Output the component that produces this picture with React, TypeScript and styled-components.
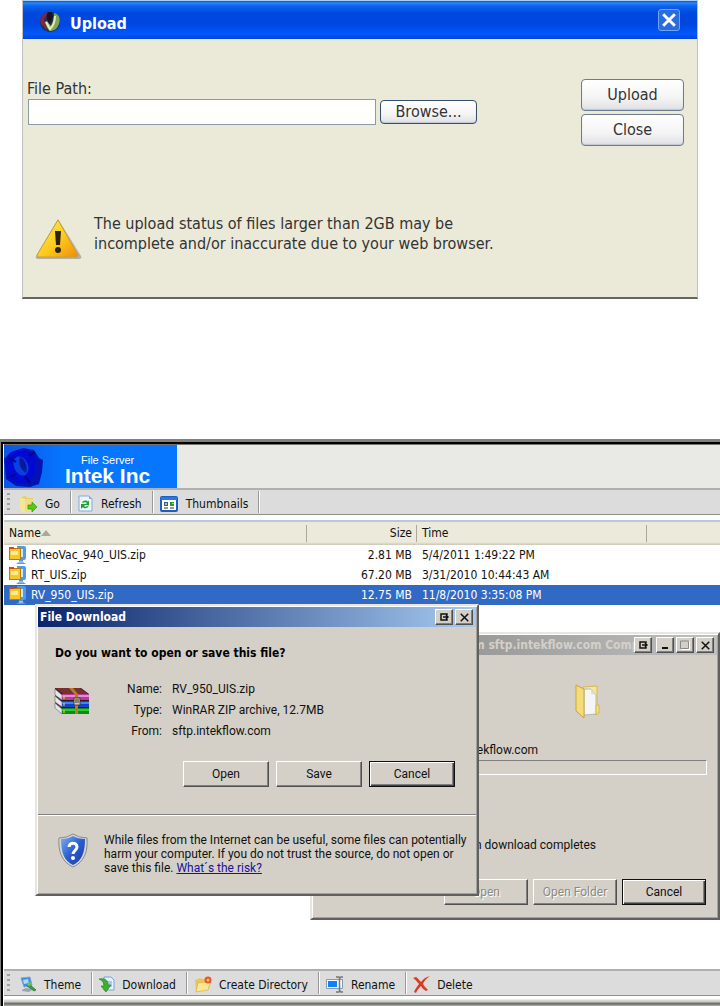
import React from "react";
import styled, { createGlobalStyle, css } from "styled-components";

const tahoma = `"DejaVu Sans Condensed", "DejaVu Sans", sans-serif`;
const sansSerif = `"Liberation Sans", Arial, sans-serif`;
const dialogSans = `Roboto, "Liberation Sans", Arial, sans-serif`;

const GlobalStyle = createGlobalStyle`
  * { box-sizing: border-box; }
  body { margin: 0; background: #fff; color: #111; font-family: ${tahoma}; font-size: 12px; }
  button, input { font: inherit; color: inherit; margin: 0; }
  svg { display: block; flex: none; }
  h1, h2, p, dl, dd { margin: 0; }
`;

const Page = styled.div`
  min-height: 100vh;
  display: flex;
  flex-direction: column;
  gap: 140px;
  overflow: hidden;
`;

/* ---------- Upload window ---------- */

const UploadWindow = styled.section`
  margin: 0 22px;
  height: 299px;
  display: flex;
  flex-direction: column;
  background: #ebe9d8;
  border: 1px solid #c0c4bc;
  border-top-color: #a9cdf4;
  border-bottom: 2px solid #666660;
  color: #333;
  font-size: 16px;
`;

const UploadTitleBar = styled.header`
  height: 38px;
  flex: none;
  display: flex;
  align-items: center;
  gap: 9px;
  padding: 4px 17px 0 16px;
  background: linear-gradient(#1b4fae 0, #2a86fb 2px, #0a63f0 5px, #0047de 12px, #0048e2 24px, #0058fb 33px, #0046d8 38px);
  color: #fff;
`;

const UploadTitle = styled.h1`
  flex: 1;
  padding-top: 4px;
  font-size: 16px;
  line-height: 20px;
`;

const TitleClose = styled.button`
  width: 22px;
  height: 22px;
  margin-bottom: 4px;
  padding: 0;
  display: grid;
  place-items: center;
  background: #2a6ce0;
  border: 1px solid #6ea6fa;
  border-radius: 3px;
`;

const UploadBody = styled.div`
  display: flex;
  justify-content: space-between;
  align-items: flex-start;
  padding: 40px 13px 0 5px;
`;

const FileField = styled.div`
  display: grid;
  grid-template-columns: 348px 97px;
  column-gap: 4px;
  align-items: center;
`;

const FieldLabel = styled.label`
  grid-column: 1 / -1;
  line-height: 20px;
  margin-left: -1px;
`;

const PathInput = styled.input`
  height: 26px;
  background: #fff;
  border: 1px solid #8b9ba8;
  outline: none;
  padding: 0 4px;
`;

const XpButton = styled.button<{ $tall?: boolean }>`
  height: ${(p) => (p.$tall ? 32 : 24)}px;
  padding: 0;
  border: 1px solid ${(p) => (p.$tall ? "#6d7d90" : "#35506e")};
  border-radius: 4px;
  background: linear-gradient(#fff, #f4f4f4 60%, #dfe0e4);
  box-shadow: inset 0 -1px 1px #c0c6d4;
  line-height: 20px;
`;

const UploadActions = styled.div`
  width: 103px;
  display: flex;
  flex-direction: column;
  gap: 3px;
`;

const Notice = styled.div`
  display: flex;
  align-items: flex-end;
  gap: 12px;
  padding: 68px 12px 0 12px;
`;

const NoticeText = styled.p`
  padding-bottom: 6px;
  line-height: 20px;
`;

/* ---------- File manager ---------- */

const FileManager = styled.main`
  position: relative;
  flex: 1;
  display: flex;
  flex-direction: column;
  border-top: 3px solid #808080;
  border-left: 1px solid #808080;
`;

const ManagerFrame = styled.div`
  flex: 1;
  display: flex;
  flex-direction: column;
  border-top: 2px solid #000;
  border-left: 2px solid #000;
  padding-left: 1px;
`;

const Banner = styled.header`
  height: 44px;
  flex: none;
  display: flex;
  border-top: 1px solid #77736e;
  background: #e9e9e6;
`;

const Brand = styled.div`
  width: 173px;
  display: flex;
  gap: 15px;
  background: linear-gradient(90deg, #0a55e6, #0676ff 60px);
  color: #fff;
  font-family: ${sansSerif};
`;

const BrandText = styled.div`
  display: flex;
  flex-direction: column;
  align-items: center;
  padding-top: 9px;
`;

const BrandCaption = styled.span`
  font-size: 11px;
  line-height: 12px;
`;

const BrandName = styled.h2`
  font-size: 21px;
  line-height: 20px;
  white-space: nowrap;
`;

const ToolbarRow = styled.div`
  height: 27px;
  flex: none;
  display: flex;
  align-items: center;
  padding-left: 3px;
  background: #dcdcdc;
  border-top: 2px solid #b0b0ae;
  border-bottom: 1px solid #8f8f8f;
`;

const Grip = styled.span`
  width: 3px;
  height: 18px;
  margin-right: 4px;
  background: repeating-linear-gradient(#a2a2a2 0 2px, #dcdcdc 2px 5px);
`;

const ToolButton = styled.button<{ $roomy?: boolean }>`
  height: 24px;
  display: flex;
  align-items: center;
  gap: ${(p) => (p.$roomy ? 8 : 7)}px;
  padding: 3px 10px 0 6px;
  background: none;
  border: 0;
  white-space: nowrap;
`;

const Divider = styled.span`
  width: 2px;
  height: 22px;
  background: #999;
  border-right: 1px solid #fff;
`;

const FileTable = styled.table`
  width: 100%;
  margin-top: 5px;
  table-layout: fixed;
  border-collapse: collapse;
  border-top: 2px solid #b7c9d9;
`;

const HeadCell = styled.th<{ $right?: boolean; $line?: boolean }>`
  height: 24px;
  padding: 0 5px 2px;
  text-align: ${(p) => (p.$right ? "right" : "left")};
  font-weight: normal;
  line-height: 18px;
  background: ${(p) =>
    p.$line
      ? "linear-gradient(#aca899, #aca899) right 3px / 1px 17px no-repeat, linear-gradient(#ebeadb 20px, #cbc7b8)"
      : "linear-gradient(#ebeadb 20px, #cbc7b8)"};
`;

const FileRow = styled.tr<{ $selected?: boolean }>`
  ${(p) =>
    p.$selected &&
    css`
      background: #316ac5;
      color: #fff;
    `}
`;

const FileCell = styled.td<{ $right?: boolean }>`
  height: 20px;
  padding: 0 5px;
  line-height: 18px;
  text-align: ${(p) => (p.$right ? "right" : "left")};
  white-space: nowrap;
`;

const FileName = styled.span`
  display: flex;
  align-items: center;
  gap: 5px;
`;

const ListSpace = styled.div`
  flex: 1;
`;

const StatusEdge = styled.div`
  height: 10px;
  flex: none;
  background: linear-gradient(#fff 3px, #d8dad4 4px, #c9cbc4 6px, #6f716c 7px, #6f716c 8px, #b7b7b7);
`;

/* ---------- Floating windows ---------- */

const Dialog = styled.section<{ $x: number; $y: number; $w: number; $h: number }>`
  position: absolute;
  left: ${(p) => p.$x}px;
  top: ${(p) => p.$y}px;
  width: ${(p) => p.$w}px;
  height: ${(p) => p.$h}px;
  display: flex;
  flex-direction: column;
  padding: 1px;
  background: #d4d0c8;
  border: 2px solid;
  border-color: #e8e6e0 #606060 #606060 #e8e6e0;
  box-shadow: inset 1px 1px #fff, inset -1px -1px #a5a29c;
  font-family: ${dialogSans};
  font-size: 12px;
`;

const DialogBar = styled.header<{ $inactive?: boolean }>`
  height: 20px;
  flex: none;
  display: flex;
  align-items: center;
  gap: 2px;
  padding: 0 3px 0 2px;
  font-family: ${tahoma};
  background: ${(p) =>
    p.$inactive
      ? "linear-gradient(90deg, #808080, #c0c0c0)"
      : "linear-gradient(90deg, #0a246a, #a6caf0)"};
  color: ${(p) => (p.$inactive ? "#d4d0c8" : "#fff")};
`;

const DialogTitle = styled.h2<{ $indent?: number }>`
  flex: 1;
  min-width: 0;
  padding-left: ${(p) => p.$indent ?? 0}px;
  font-size: 12px;
  line-height: 16px;
  white-space: nowrap;
`;

const raised = css`
  border: 1px solid;
  border-color: #fff #505050 #505050 #fff;
  box-shadow: inset -1px -1px #808080;
  background: #d4d0c8;
`;

const CaptionButton = styled.button<{ $gap?: number }>`
  ${raised}
  width: 18px;
  height: 16px;
  flex: none;
  padding: 0;
  display: grid;
  place-items: center;
  margin-left: ${(p) => p.$gap ?? 0}px;
`;

const PushButton = styled.button<{ $primary?: boolean; $narrow?: boolean }>`
  ${raised}
  width: ${(p) => (p.$narrow ? 84 : 86)}px;
  height: 26px;
  padding: 0;
  line-height: 18px;
  ${(p) =>
    p.$primary &&
    css`
      border-color: #111;
      box-shadow: inset 1px 1px #fff, inset -1px -1px #404040, inset -2px -2px #808080;
    `}
  &:disabled {
    color: #8c8a84;
    text-shadow: 1px 1px #fff;
  }
`;

const Question = styled.p`
  padding: 18px 17px 0;
  font-family: ${tahoma};
  font-weight: bold;
  line-height: 16px;
  color: #000;
`;

const DownloadInfo = styled.div`
  display: flex;
  align-items: center;
  gap: 37px;
  padding: 18px 17px 0 16px;
`;

const ArchiveFrame = styled.span`
  padding-bottom: 20px;
`;

const Details = styled.dl`
  display: grid;
  grid-template-columns: 35px auto;
  column-gap: 10px;
  line-height: 21px;
`;

const Term = styled.dt`
  text-align: right;
`;

const DialogButtons = styled.div<{ $top: number; $right: number; $gap: number }>`
  display: flex;
  justify-content: flex-end;
  gap: ${(p) => p.$gap}px;
  padding: ${(p) => `${p.$top}px ${p.$right}px 0 0`};
`;

const Rule = styled.hr`
  width: 100%;
  margin: 27px 0 0;
  border: 0;
  border-top: 1px solid #808080;
  border-bottom: 1px solid #fff;
`;

const Warning = styled.div`
  display: flex;
  gap: 16px;
  padding: 17px 8px 0 20px;
`;

const WarningText = styled.p`
  line-height: 14px;
  white-space: nowrap;
`;

const RiskLink = styled.a`
  color: #1414a0;
`;

const FolderRow = styled.div`
  padding: 29px 0 0 262px;
`;

const SourceText = styled.p`
  padding: 22px 179px 0 0;
  text-align: right;
  line-height: 18px;
`;

const ProgressTrack = styled.div`
  height: 15px;
  margin: 1px 10px 0;
  border: 1px solid;
  border-color: #808080 #fff #fff #808080;
`;

const CompletionText = styled.p`
  padding: 61px 121px 0 0;
  text-align: right;
  line-height: 18px;
`;

/* ---------- Drawings ---------- */

const AppLogo = () => (
  <svg width="22" height="24" viewBox="0 0 22 24">
    <circle cx="11" cy="12" r="10" fill="#21304f" />
    <path d="M10 2C3 3 0 8 2 14l6 7c-1-5-2-8-3-12z" fill="#7d2745" />
    <path d="M9 2c-2 3-1 7 1 13l4-8-1-5z" fill="#1a1020" />
    <path d="M15 3c5 1 7 6 5 11-2 5-5 7-9 7-3-2-4-5-5-9l2-1 4 5c2-4 3-8 3-13z" fill="#7ea858" />
    <path d="M7 12l4 7q5-5 5-13" stroke="#e2f0b4" strokeWidth="2" fill="none" />
  </svg>
);

const WarningIcon = () => (
  <svg width="47" height="42" viewBox="0 0 47 42">
    <defs>
      <linearGradient id="warn" x1="0" y1="0" x2="1" y2="1">
        <stop offset="0" stopColor="#fff45a" />
        <stop offset=".55" stopColor="#fcc91c" />
        <stop offset="1" stopColor="#ef8b0c" />
      </linearGradient>
    </defs>
    <path d="M23 1L46 38q1 3-2 3H3q-3 0-2-3z" fill="#b3b0a8" />
    <path d="M23 2L43 37q0 2-2 2H4q-2 0-2-2z" fill="url(#warn)" stroke="#c8a03a" />
    <path d="M20 13h6l-1 14h-4z" fill="#2b230c" />
    <circle cx="23" cy="32" r="3" fill="#2b230c" />
  </svg>
);

const CrossIcon = ({ size, color, width }: { size: number; color: string; width: number }) => (
  <svg width={size} height={size} viewBox="0 0 12 12">
    <path d="M1 1l10 10M11 1L1 11" stroke={color} strokeWidth={width} />
  </svg>
);

const BrandMark = () => (
  <svg width="46" height="43" viewBox="0 0 46 43">
    <path d="M0 14L7 7l12-4 11 2 5 8 4 2-1 12-3 12-9 3-14-1L2 34z" fill="#0212b4" />
    <path d="M2 13c5-9 20-11 27-5 5 6 3 20-2 27-8 6-20 3-24-4z" fill="#0009d4" />
    <ellipse cx="17" cy="21" rx="7" ry="10" fill="#0a3fe0" transform="rotate(-24 17 21)" />
    <path d="M16 12c5 2 8 9 6 16-5-3-8-9-6-16z" fill="#061b9a" />
    <path d="M4 12l8 5M21 31l5 7M25 11l6-4M5 33l7-4" stroke="#010880" strokeWidth="2" />
  </svg>
);

const GoIcon = () => (
  <svg width="17" height="18" viewBox="0 0 17 18">
    <path d="M1 2l5-1 1 2h6v12H2z" fill="#e9cf62" />
    <path d="M0 2l5 2v14l-5-3z" fill="#f5e79a" />
    <path d="M5 4h8v11l-8 2z" fill="#f0dc83" />
    <path d="M8 10h4V7l5 5-5 5v-3H8z" fill="#58c81a" stroke="#2c9410" strokeWidth=".7" />
  </svg>
);

const RefreshIcon = () => (
  <svg width="15" height="17" viewBox="0 0 15 17">
    <path d="M1 1h10l3 3v12H1z" fill="#eef5ff" stroke="#86a9d8" />
    <path d="M11 1v3h3z" fill="#86a9d8" />
    <path d="M4 8c1-3 5-3 6-1l1-2v5H7l2-2c-1-1-3-1-5 0zM11 10c-1 4-5 4-6 2l-2 2V9h5l-2 2c1 1 3 1 5-1z" fill="#1f9f2c" />
  </svg>
);

const ThumbnailsIcon = () => (
  <svg width="18" height="16" viewBox="0 0 18 16">
    <rect x="1" y="1" width="16" height="14" rx="1" fill="#fff" stroke="#1d5fc0" strokeWidth="2" />
    <path d="M1 1h16v3H1z" fill="#2b78dc" />
    <path d="M4 6h4v4H4z" fill="#235fae" />
    <path d="M10 6h4v4h-4z" fill="#2f9436" />
    <path d="M5 7h2v2H5zM12 7h2v1h-2z" fill="#e7bd2d" />
    <path d="M4 12h4M10 12h4" stroke="#333" />
  </svg>
);

const ZipIcon = () => (
  <svg width="17" height="18" viewBox="0 0 17 18">
    <path d="M8 0h7q2 0 2 2v10q0 2-2 2h-1v2l3 2H7l3-2v-2z" fill="#4e9be6" />
    <path d="M11 3h3v8h-3z" fill="#cfe6fb" />
    <path d="M10 16h4" stroke="#cfe6fb" />
    <rect x=".5" y="2.500" width="11" height="11" fill="#f6c62f" stroke="#b97d0c" />
    <path d="M0 1h5v2H0z" fill="#e0431c" />
    <path d="M2 5h7v4H2z" fill="#fdea90" />
  </svg>
);

const ThemeIcon = () => (
  <svg width="17" height="17" viewBox="0 0 17 17">
    <path d="M1 2l9-1 2 8-8 2z" fill="#3c8fe0" stroke="#7aa3cf" />
    <path d="M3 4l5-1 1 4-5 1z" fill="#a8dcff" />
    <path d="M2 14q5-4 10 0l-3 2-7-1z" fill="#9aa4ae" />
    <path d="M8 7l8 7-2 1-7-5z" fill="#3c9b3a" stroke="#1c641f" strokeWidth=".6" />
    <circle cx="9" cy="8" r="2" fill="#6fc062" />
  </svg>
);

const DownloadIcon = () => (
  <svg width="16" height="17" viewBox="0 0 16 17">
    <path d="M5 1h7l3 3v10H5z" fill="#e6f1ff" stroke="#7aa0d8" />
    <path d="M8 6h5M9 8h4M10 10h3" stroke="#6f9fe6" />
    <path d="M0 3c6-1 9 1 9 6h3l-5 7-5-6h3c0-3-1-5-5-7z" fill="#3eb02b" stroke="#237a18" strokeWidth=".6" />
  </svg>
);

const CreateIcon = () => (
  <svg width="18" height="17" viewBox="0 0 18 17">
    <path d="M1 4l5-2 2 1 7-1v11L2 16z" fill="#eac65a" />
    <path d="M2 16l2-9 13-2-3 9z" fill="#fbe695" stroke="#d9a93b" strokeWidth=".6" />
    <circle cx="14" cy="4" r="3.500" fill="#e9542a" />
    <circle cx="14" cy="4" r="1.500" fill="#ffc45a" />
  </svg>
);

const RenameIcon = () => (
  <svg width="18" height="17" viewBox="0 0 18 17">
    <path d="M.5 3.500h16v9H.5z" fill="#f4f7fb" stroke="#8a99ae" />
    <path d="M2 5h9v6H2z" fill="#1180f4" />
    <path d="M10 1h3l1 1 1-1h2M10 16h3l1-1 1 1h2M13.500 2v13" stroke="#777" fill="none" strokeWidth="1.500" />
  </svg>
);

const DeleteIcon = () => (
  <svg width="17" height="17" viewBox="0 0 17 17">
    <path d="M0 2l3-1c2 1 3 3 5 5 2-3 5-5 9-6-4 3-6 5-7 8 1 2 3 4 5 6l-2 1c-2-1-4-3-5-5-2 2-4 4-5 7l-2-1c1-3 3-5 5-8-2-2-3-4-6-6z" fill="#dc3b22" />
  </svg>
);

const ArchiveIcon = () => (
  <svg width="36" height="28" viewBox="0 0 36 28">
    <path d="M1 1h26l8 6v20H8L1 18z" fill="#2a1a1a" />
    <path d="M1 1h25l8 6H9z" fill="#77302c" />
    <path d="M8 7h27v6H8z" fill="#b6399c" />
    <path d="M8 8h27v2H8z" fill="#e58bd2" />
    <path d="M8 14h27v6H8z" fill="#1740c8" />
    <path d="M8 15h27v2H8z" fill="#3f83f4" />
    <path d="M8 21h27v6H8z" fill="#0d8b16" />
    <path d="M8 22h27v2H8z" fill="#27cf2e" />
    <path d="M1 2l7 6v5L1 8zM1 9l7 6v5l-7-5zM1 16l7 6v5l-7-6z" fill="#e6e6ec" stroke="#666" strokeWidth=".6" />
    <path d="M15 1h4l5 6v20h-3V8z" fill="#b77a2c" />
    <path d="M20 11h6v7h-6z" fill="#d7cba6" stroke="#333" strokeWidth=".8" />
    <path d="M22 12v4M24 12v4" stroke="#333" />
    <path d="M10 9v3M10 16v3M10 23v3" stroke="#f4d93b" />
  </svg>
);

const ShieldIcon = () => (
  <svg width="30" height="35" viewBox="0 0 30 35">
    <defs>
      <linearGradient id="shield" x1="0" y1="0" x2="1" y2="1">
        <stop offset="0" stopColor="#7eb0f0" />
        <stop offset=".5" stopColor="#2a5fd0" />
        <stop offset="1" stopColor="#1b37a8" />
      </linearGradient>
    </defs>
    <path d="M15 1q6 4 14 4c1 14-3 24-14 29C4 29 0 19 1 5q8 0 14-4z" fill="#d8d8d8" stroke="#8a8a8a" />
    <path d="M15 3q5 3 12 3c0 13-3 22-12 26C6 28 3 19 3 6q7 0 12-3z" fill="url(#shield)" />
    <path d="M11 14c0-5 8-5 8 0 0 3-4 4-4 7" stroke="#fff" strokeWidth="3" fill="none" />
    <circle cx="15" cy="25" r="2" fill="#fff" />
  </svg>
);

const FolderIcon = () => (
  <svg width="25" height="35" viewBox="0 0 25 35">
    <path d="M8 3l14-1v28l-14 1z" fill="#f6e79a" stroke="#d6b94c" />
    <path d="M9 5h7l5 6v19l-12 1z" fill="#f5f5f5" stroke="#b9b9b9" />
    <path d="M16 5v5l5 1z" fill="#ddd" />
    <path d="M1 1l8 4v29l-8-7z" fill="#f4dc78" stroke="#caa53a" />
    <path d="M21 21h3v8l-3 2z" fill="#f4e08a" stroke="#d6b94c" />
  </svg>
);

const HelpIcon = () => (
  <svg width="9" height="8" viewBox="0 0 9 8">
    <path d="M7 2V1H1v6h6V6M3 4h5M6 2l2 2-2 2" stroke="#111" strokeWidth="1.500" fill="none" />
  </svg>
);

const MinimizeIcon = () => (
  <svg width="9" height="8" viewBox="0 0 9 8">
    <path d="M1 7h6" stroke="#111" strokeWidth="2" />
  </svg>
);

const MaximizeIcon = () => (
  <svg width="10" height="10" viewBox="0 0 10 10">
    <path d="M.5 1h8v7.500h-8z" stroke="#888" fill="none" />
    <path d="M9.500 1v8.500H1" stroke="#fff" fill="none" />
  </svg>
);

const SortIcon = () => (
  <svg width="10" height="6" viewBox="0 0 10 6">
    <path d="M5 0l5 6H0z" fill="#aca899" />
  </svg>
);

const NameHeading = styled.span`
  display: flex;
  align-items: center;
`;

/* ---------- Composition ---------- */

const files = [
  { name: "RheoVac_940_UIS.zip", size: "2.81 MB", time: "5/4/2011 1:49:22 PM" },
  { name: "RT_UIS.zip", size: "67.20 MB", time: "3/31/2010 10:44:43 AM" },
  { name: "RV_950_UIS.zip", size: "12.75 MB", time: "11/8/2010 3:35:08 PM", selected: true },
];

type Tool = { label: string; icon: React.ReactNode };

const topTools: Tool[] = [
  { label: "Go", icon: <GoIcon /> },
  { label: "Refresh", icon: <RefreshIcon /> },
  { label: "Thumbnails", icon: <ThumbnailsIcon /> },
];

const bottomTools: Tool[] = [
  { label: "Theme", icon: <ThemeIcon /> },
  { label: "Download", icon: <DownloadIcon /> },
  { label: "Create Directory", icon: <CreateIcon /> },
  { label: "Rename", icon: <RenameIcon /> },
  { label: "Delete", icon: <DeleteIcon /> },
];

const Toolbar = ({ tools, roomy }: { tools: Tool[]; roomy?: boolean }) => (
  <ToolbarRow role="toolbar">
    <Grip />
    {tools.map((tool, i) => (
      <React.Fragment key={tool.label}>
        <ToolButton type="button" $roomy={roomy}>
          {tool.icon}
          {tool.label}
        </ToolButton>
        {(roomy || i < tools.length - 1) && <Divider />}
      </React.Fragment>
    ))}
  </ToolbarRow>
);

export default function App() {
  return (
    <>
      <GlobalStyle />
      <Page>
        <UploadWindow>
          <UploadTitleBar>
            <AppLogo />
            <UploadTitle>Upload</UploadTitle>
            <TitleClose type="button" aria-label="Close window">
              <CrossIcon size={14} color="#fff" width={2.5} />
            </TitleClose>
          </UploadTitleBar>
          <UploadBody>
            <FileField>
              <FieldLabel htmlFor="path">File Path:</FieldLabel>
              <PathInput id="path" type="text" />
              <XpButton type="button">Browse...</XpButton>
            </FileField>
            <UploadActions>
              <XpButton type="button" $tall>Upload</XpButton>
              <XpButton type="button" $tall>Close</XpButton>
            </UploadActions>
          </UploadBody>
          <Notice>
            <WarningIcon />
            <NoticeText>
              The upload status of files larger than 2GB may be
              <br />
              incomplete and/or inaccurate due to your web browser.
            </NoticeText>
          </Notice>
        </UploadWindow>

        <FileManager>
          <ManagerFrame>
            <Banner>
              <Brand>
                <BrandMark />
                <BrandText>
                  <BrandCaption>File Server</BrandCaption>
                  <BrandName>Intek Inc</BrandName>
                </BrandText>
              </Brand>
            </Banner>
            <Toolbar tools={topTools} roomy />
            <FileTable>
              <colgroup>
                <col style={{ width: 303 }} />
                <col style={{ width: 110 }} />
                <col style={{ width: 230 }} />
                <col />
              </colgroup>
              <thead>
                <tr>
                  <HeadCell $line>
                    <NameHeading>
                      Name
                      <SortIcon />
                    </NameHeading>
                  </HeadCell>
                  <HeadCell $right $line>Size</HeadCell>
                  <HeadCell $line>Time</HeadCell>
                  <HeadCell />
                </tr>
              </thead>
              <tbody>
                {files.map((f) => (
                  <FileRow key={f.name} $selected={f.selected}>
                    <FileCell>
                      <FileName>
                        <ZipIcon />
                        {f.name}
                      </FileName>
                    </FileCell>
                    <FileCell $right>{f.size}</FileCell>
                    <FileCell>{f.time}</FileCell>
                    <FileCell />
                  </FileRow>
                ))}
              </tbody>
            </FileTable>
            <ListSpace />
            <Toolbar tools={bottomTools} />
            <StatusEdge />
          </ManagerFrame>

          <Dialog $x={309} $y={190} $w={410} $h={288}>
            <DialogBar $inactive>
              <DialogTitle $indent={141}>from sftp.intekflow.com Comp</DialogTitle>
              <CaptionButton type="button" aria-label="Options"><HelpIcon /></CaptionButton>
              <CaptionButton type="button" aria-label="Minimize" $gap={2}><MinimizeIcon /></CaptionButton>
              <CaptionButton type="button" aria-label="Maximize"><MaximizeIcon /></CaptionButton>
              <CaptionButton type="button" aria-label="Close"><CrossIcon size={9} color="#111" width={2} /></CaptionButton>
            </DialogBar>
            <FolderRow>
              <FolderIcon />
            </FolderRow>
            <SourceText>from sftp.intekflow.com</SourceText>
            <ProgressTrack />
            <CompletionText>when download completes</CompletionText>
            <DialogButtons $top={25} $right={11} $gap={5}>
              <PushButton type="button" $narrow disabled>Open</PushButton>
              <PushButton type="button" $narrow disabled>Open Folder</PushButton>
              <PushButton type="button" $narrow $primary>Cancel</PushButton>
            </DialogButtons>
          </Dialog>

          <Dialog $x={34} $y={162} $w={444} $h={292}>
            <DialogBar>
              <DialogTitle>File Download</DialogTitle>
              <CaptionButton type="button" aria-label="Options"><HelpIcon /></CaptionButton>
              <CaptionButton type="button" aria-label="Close"><CrossIcon size={9} color="#111" width={2} /></CaptionButton>
            </DialogBar>
            <Question>Do you want to open or save this file?</Question>
            <DownloadInfo>
              <ArchiveFrame>
                <ArchiveIcon />
              </ArchiveFrame>
              <Details>
                <Term>Name:</Term>
                <dd>RV_950_UIS.zip</dd>
                <Term>Type:</Term>
                <dd>WinRAR ZIP archive, 12.7MB</dd>
                <Term>From:</Term>
                <dd>sftp.intekflow.com</dd>
              </Details>
            </DownloadInfo>
            <DialogButtons $top={19} $right={21} $gap={7}>
              <PushButton type="button">Open</PushButton>
              <PushButton type="button">Save</PushButton>
              <PushButton type="button" $primary>Cancel</PushButton>
            </DialogButtons>
            <Rule />
            <Warning>
              <ShieldIcon />
              <WarningText>
                While files from the Internet can be useful, some files can potentially
                <br />
                harm your computer. If you do not trust the source, do not open or
                <br />
                save this file. <RiskLink href="#risk">What´s the risk?</RiskLink>
              </WarningText>
            </Warning>
          </Dialog>
        </FileManager>
      </Page>
    </>
  );
}
